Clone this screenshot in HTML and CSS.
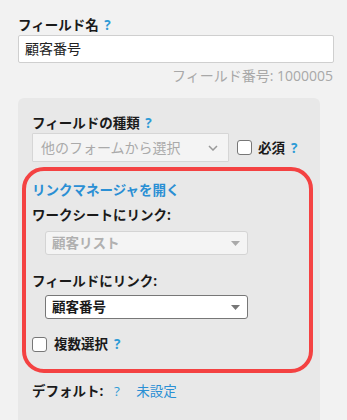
FILE: index.html
```html
<!DOCTYPE html>
<html lang="ja">
<head>
  <meta charset="UTF-8" />
  <meta name="viewport" content="width=device-width, initial-scale=1" />
  <title>フィールド設定</title>
  <link rel="stylesheet" href="styles.css">
</head>
<body>

  <div class="label">フィールド名 <span class="help">?</span></div>
  <div class="textbox">顧客番号</div>
  <div class="field-no">フィールド番号: 1000005</div>

  <div class="panel">
    <div class="label type-label">フィールドの種類 <span class="help">?</span></div>
    <div class="type-row">
      <div class="select disabled wide">
        <span>他のフォームから選択</span>
        <svg class="chevron" width="10" height="6" viewBox="0 0 10 6"><path d="M1 1l4 4 4-4" fill="none" stroke="#999" stroke-width="1.5"/></svg>
      </div>
      <span class="check"></span>
      <span class="label inline">必須</span>
      <span class="help">?</span>
    </div>

    <div class="link-box">
      <a class="link" href="#">リンクマネージャを開く</a>
      <div class="label sub">ワークシートにリンク:</div>
      <div class="select small disabled">
        <span>顧客リスト</span>
        <svg class="tri" width="9" height="5" viewBox="0 0 9 5"><path d="M0 0h9L4.5 5z" fill="#aaa"/></svg>
      </div>
      <div class="label sub second">フィールドにリンク:</div>
      <div class="select small active">
        <span>顧客番号</span>
        <svg class="tri" width="9" height="5" viewBox="0 0 9 5"><path d="M0 0h9L4.5 5z" fill="#777"/></svg>
      </div>
      <div class="multi-row">
        <span class="check"></span>
        <span class="label inline">複数選択</span>
        <span class="help">?</span>
      </div>
    </div>

    <div class="default-row">
      <span class="label inline">デフォルト:</span>
      <span class="help">?</span>
      <a class="link unset" href="#">未設定</a>
    </div>
  </div>

</body>
</html>
```

FILE: styles.css
```css
body {
  font-family: "Open Sans", "Noto Sans CJK JP", sans-serif;
  font-size: 13.5px;
  line-height: 18px;
  background: #f2f2f2;
  color: #222;
  margin: 0;
  padding: 16px 13px 0 18px;
}

.label {
  font-weight: bold;
  color: #1a1a1a;
}

.label.inline {
  display: inline-block;
}

.help {
  color: #2e9bd6;
  font-weight: bold;
  margin-left: 2px;
}

.textbox {
  margin-top: 1px;
  height: 26px;
  line-height: 26px;
  background: #fff;
  border: 1px solid #cfcfcf;
  border-radius: 2px;
  padding: 0 6px;
  font-size: 14px;
}

.field-no {
  text-align: right;
  color: #a8a8a8;
  font-size: 14px;
  margin-top: 4px;
  padding-right: 1px;
}

.panel {
  margin-top: 13px;
  width: 302px;
  height: 330px;
  background: #e8e8e8;
  border-radius: 6px;
  padding-top: 16px;
  box-sizing: border-box;
}

.type-label {
  padding-left: 14px;
}

.type-row {
  display: flex;
  align-items: center;
  padding-left: 14px;
  margin-top: 1px;
}

.type-row .help,
.multi-row .help {
  margin-left: 6px;
}

.select {
  display: flex;
  align-items: center;
  justify-content: space-between;
  box-sizing: border-box;
  background: #fff;
  border: 1px solid #c8c8c8;
  border-radius: 3px;
  padding: 0 8px 0 8px;
}

.select.wide {
  width: 197px;
  height: 29px;
  border-color: #d6d6d6;
  border-radius: 1px;
  font-size: 14px;
  padding-right: 10px;
}

.select.disabled {
  background: #f4f4f4;
  color: #aaa;
}

.select.small {
  width: 203px;
  height: 24px;
  margin-left: 13px;
  font-weight: bold;
  padding: 0 7px 0 6px;
}

.select.active {
  border-color: #777;
  color: #1a1a1a;
}

.select.small.disabled {
  border-color: #d4d4d4;
  color: #b0b0b0;
}

.check {
  display: inline-block;
  width: 13px;
  height: 13px;
  background: #fff;
  border: 1px solid #777;
  border-radius: 3px;
  flex: none;
}

.type-row .check {
  margin: 0 6px 0 8px;
}

.link-box {
  margin: 5px 7px 0 4px;
  border: 4px solid #f44242;
  border-radius: 22px;
  padding: 10px 6px 16px 6px;
}

.link {
  color: #2a8fd4;
  font-weight: bold;
  text-decoration: none;
}

.link-box .link {
  display: block;
}

.sub {
  margin-top: 7px;
  margin-bottom: 7px;
}

.sub.second {
  margin-top: 17px;
  margin-bottom: 5px;
}

.multi-row {
  display: flex;
  align-items: center;
  margin-top: 16px;
}

.multi-row .check {
  margin-right: 7px;
}

.default-row {
  padding-left: 14px;
  margin-top: 9px;
}

.default-row .help {
  margin-left: 7px;
  font-weight: normal;
}

.unset {
  margin-left: 13px;
  font-weight: normal;
}
```
